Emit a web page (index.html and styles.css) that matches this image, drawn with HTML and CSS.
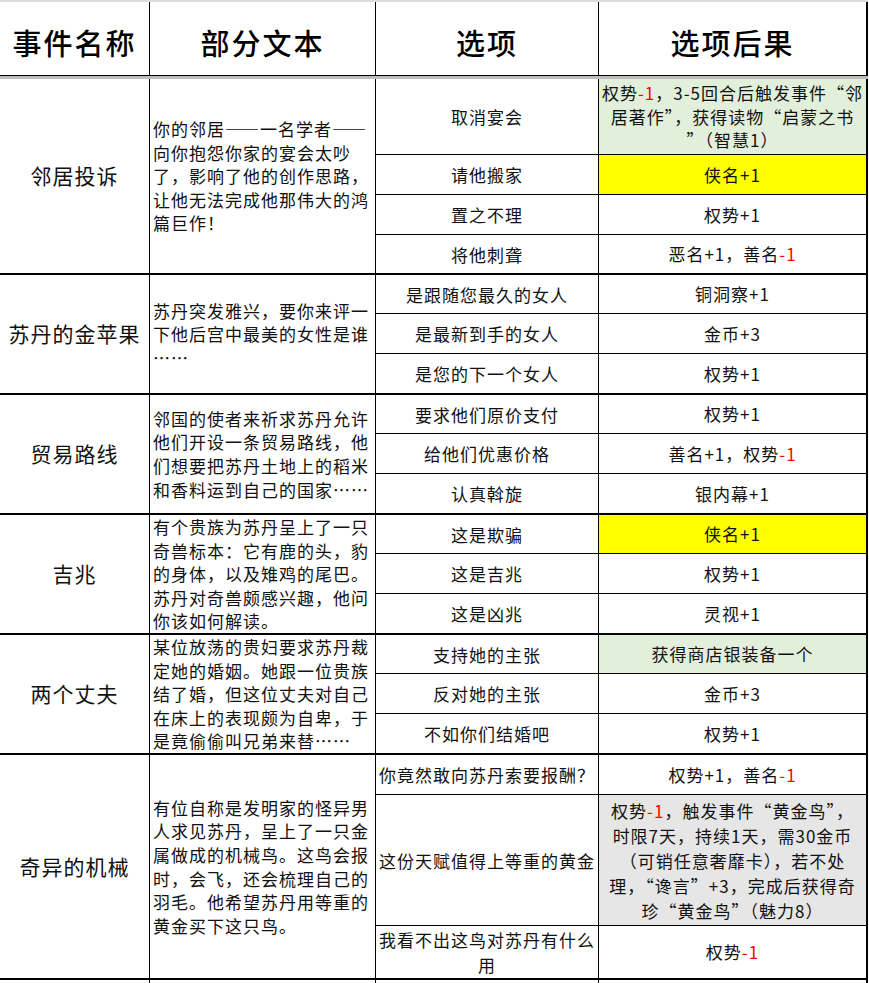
FILE: index.html
```html
<!DOCTYPE html>
<html lang="zh-CN">
<head>
<meta charset="utf-8">
<title>事件表</title>
<link rel="stylesheet" href="styles.css">
</head>
<body>
<div class="sheet">
  <div class="head">
    <div class="hcell">事件名称</div>
    <div class="hcell">部分文本</div>
    <div class="hcell">选项</div>
    <div class="hcell hlast">选项后果</div>
  </div>
  <div class="band"></div>
  <div class="grid">
    <!-- 邻居投诉 -->
    <div class="cell name span4 end">邻居投诉</div>
    <div class="cell text span4 end"><div>你的邻居——一名学者——<br>向你抱怨你家的宴会太吵<br>了，影响了他的创作思路，<br>让他无法完成他那伟大的鸿<br>篇巨作！</div></div>
    <div class="cell opt">取消宴会</div>
    <div class="cell res green"><div>权势<span class="red">-1</span>，3-5回合后触发事件“邻<br>居著作”，获得读物“启蒙之书<br>”（智慧1）</div></div>
    <div class="cell opt">请他搬家</div>
    <div class="cell res yellow">侠名+1</div>
    <div class="cell opt">置之不理</div>
    <div class="cell res">权势+1</div>
    <div class="cell opt end">将他刺聋</div>
    <div class="cell res end"><div>恶名+1，善名<span class="red">-1</span></div></div>

    <!-- 苏丹的金苹果 -->
    <div class="cell name span3 end">苏丹的金苹果</div>
    <div class="cell text span3 end"><div>苏丹突发雅兴，要你来评一<br>下他后宫中最美的女性是谁<br>……</div></div>
    <div class="cell opt">是跟随您最久的女人</div>
    <div class="cell res">铜洞察+1</div>
    <div class="cell opt">是最新到手的女人</div>
    <div class="cell res">金币+3</div>
    <div class="cell opt end">是您的下一个女人</div>
    <div class="cell res end">权势+1</div>

    <!-- 贸易路线 -->
    <div class="cell name span3 end">贸易路线</div>
    <div class="cell text span3 end"><div>邻国的使者来祈求苏丹允许<br>他们开设一条贸易路线，他<br>们想要把苏丹土地上的稻米<br>和香料运到自己的国家……</div></div>
    <div class="cell opt">要求他们原价支付</div>
    <div class="cell res">权势+1</div>
    <div class="cell opt">给他们优惠价格</div>
    <div class="cell res"><div>善名+1，权势<span class="red">-1</span></div></div>
    <div class="cell opt end">认真斡旋</div>
    <div class="cell res end">银内幕+1</div>

    <!-- 吉兆 -->
    <div class="cell name span3 end">吉兆</div>
    <div class="cell text span3 end"><div>有个贵族为苏丹呈上了一只<br>奇兽标本：它有鹿的头，豹<br>的身体，以及雉鸡的尾巴。<br>苏丹对奇兽颇感兴趣，他问<br>你该如何解读。</div></div>
    <div class="cell opt">这是欺骗</div>
    <div class="cell res yellow">侠名+1</div>
    <div class="cell opt">这是吉兆</div>
    <div class="cell res">权势+1</div>
    <div class="cell opt end">这是凶兆</div>
    <div class="cell res end">灵视+1</div>

    <!-- 两个丈夫 -->
    <div class="cell name span3 end">两个丈夫</div>
    <div class="cell text span3 end"><div>某位放荡的贵妇要求苏丹裁<br>定她的婚姻。她跟一位贵族<br>结了婚，但这位丈夫对自己<br>在床上的表现颇为自卑，于<br>是竟偷偷叫兄弟来替……</div></div>
    <div class="cell opt">支持她的主张</div>
    <div class="cell res green">获得商店银装备一个</div>
    <div class="cell opt">反对她的主张</div>
    <div class="cell res">金币+3</div>
    <div class="cell opt end">不如你们结婚吧</div>
    <div class="cell res end">权势+1</div>

    <!-- 奇异的机械 -->
    <div class="cell name span3 end">奇异的机械</div>
    <div class="cell text span3 end"><div>有位自称是发明家的怪异男<br>人求见苏丹，呈上了一只金<br>属做成的机械鸟。这鸟会报<br>时，会飞，还会梳理自己的<br>羽毛。他希望苏丹用等重的<br>黄金买下这只鸟。</div></div>
    <div class="cell opt">你竟然敢向苏丹索要报酬？</div>
    <div class="cell res"><div>权势+1，善名<span class="red">-1</span></div></div>
    <div class="cell opt">这份天赋值得上等重的黄金</div>
    <div class="cell res gray"><div>权势<span class="red">-1</span>，触发事件“黄金鸟”，<br>时限7天，持续1天，需30金币<br>（可销任意奢靡卡），若不处<br>理，“谗言”+3，完成后获得奇<br>珍“黄金鸟”（魅力8）</div></div>
    <div class="cell opt end"><div>我看不出这鸟对苏丹有什么<br>用</div></div>
    <div class="cell res end"><div>权势<span class="red">-1</span></div></div>

    <!-- next row start -->
    <div class="cell tail"></div>
    <div class="cell tail"></div>
    <div class="cell tail"></div>
    <div class="cell tail res"></div>
  </div>
</div>
</body>
</html>
```

FILE: styles.css
```css
html, body {
  margin: 0;
  padding: 0;
  background: #ffffff;
}

body {
  font-family: "Noto Sans CJK SC", "Noto Sans", sans-serif;
  color: #111111;
  overflow: hidden;
}

.sheet {
  width: 868px;
  border-top: 2px solid #dcdcdc;
}

.head,
.grid {
  display: grid;
  grid-template-columns: 150px 226px 223px 269px;
}

.head {
  height: 74px;
  box-sizing: border-box;
  border-bottom: 1px solid #000;
}

.hcell {
  display: flex;
  align-items: center;
  justify-content: center;
  border-right: 1px solid #000;
  font-size: 29px;
  letter-spacing: 2px;
  font-weight: 500;
  color: #000;
  padding-top: 6px;
}

.hlast {
  border-right-width: 2px;
}

.band {
  height: 3px;
  background: #bdbdbd;
}

.grid {
  grid-template-rows:
    76px 40px 40px 40px
    39px 40px 41px
    39px 40px 41px
    39px 40px 41px
    39px 40px 41px
    40px 131px 54px
    4px;
}

.cell {
  box-sizing: border-box;
  border-right: 1px solid #000;
  border-bottom: 1px solid #000;
  display: flex;
  align-items: center;
  justify-content: center;
  text-align: center;
  white-space: nowrap;
  overflow: hidden;
  font-size: 17px;
  letter-spacing: 1px;
  line-height: 23.6px;
}

.end {
  border-bottom-width: 2px;
}

.span4 {
  grid-row: span 4;
}

.span3 {
  grid-row: span 3;
}

.name {
  font-size: 21px;
  letter-spacing: 1px;
}

.text {
  justify-content: flex-start;
  text-align: left;
  padding: 0 2px 0 3px;
}

.opt {
  line-height: 25px;
}

.res {
  border-right-width: 2px;
}

.red {
  color: #ff0000;
}

.green {
  background: #e2efda;
}

.yellow {
  background: #ffff00;
}

.gray {
  background: #e7e6e6;
  line-height: 25px;
}

.tail {
  border-bottom: none;
}
```
